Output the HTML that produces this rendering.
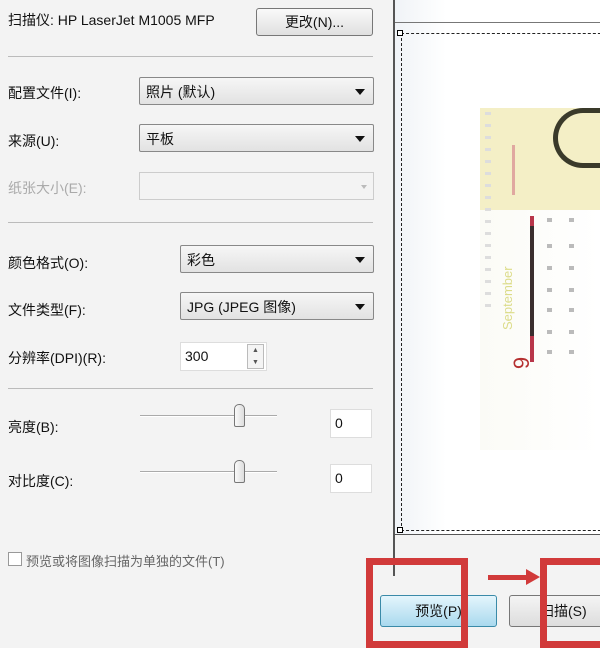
<!DOCTYPE html><html><head><meta charset="utf-8"><style>
*{box-sizing:border-box;margin:0;padding:0}
body{width:600px;height:640px;overflow:hidden;background:#f3f3f3;position:relative;font-family:"Liberation Sans","Noto Sans CJK SC",sans-serif;font-size:14px;color:#111}
.a{position:absolute}
.lbl{position:absolute;left:8px;font-size:14px}
.cb{position:absolute;border:1px solid #888;border-radius:2px;background:linear-gradient(#f6f6f6,#e2e2e2);padding:4px 6px;font-size:14px}
.cb:after{content:"";position:absolute;right:8px;top:11px;border:5px solid transparent;border-top:6px solid #111;border-bottom:0}
.hr{position:absolute;left:8px;width:365px;height:1px;background:#bbb}
.inp{position:absolute;background:#fff;border:1px solid #ddd;padding:5px 4px;font-size:14px}
.track{position:absolute;left:140px;width:137px;height:2px;background:#aaa;border-bottom:1px solid #fff}
.thumb{position:absolute;width:11px;height:23px;border:1px solid #777;border-radius:5px 5px 2px 2px;background:linear-gradient(90deg,#fafafa,#ddd)}
.d{position:absolute;width:5px;height:4px;background:#bbb}
</style></head><body>
<div class="lbl" style="top:10px">扫描仪: HP LaserJet M1005 MFP</div>
<div class="a" style="left:256px;top:8px;width:117px;height:28px;border:1px solid #777;border-radius:3px;background:linear-gradient(#fafafa,#e0e0e0);text-align:center;line-height:26px">更改(N)...</div>
<div class="hr" style="top:56px"></div>
<div class="lbl" style="top:83px">配置文件(I):</div>
<div class="cb" style="left:139px;top:77px;width:235px;height:28px">照片 (默认)</div>
<div class="lbl" style="top:131px">来源(U):</div>
<div class="cb" style="left:139px;top:124px;width:235px;height:28px">平板</div>
<div class="lbl" style="top:178px;color:#aaa">纸张大小(E):</div>
<div class="a" style="left:139px;top:172px;width:235px;height:28px;border:1px solid #ccc;background:#f3f3f3"></div>
<div class="a" style="left:361px;top:185px;border:3px solid transparent;border-top:4px solid #bbb"></div>
<div class="hr" style="top:222px"></div>
<div class="lbl" style="top:253px">颜色格式(O):</div>
<div class="cb" style="left:180px;top:245px;width:194px;height:28px">彩色</div>
<div class="lbl" style="top:300px">文件类型(F):</div>
<div class="cb" style="left:180px;top:292px;width:194px;height:28px">JPG (JPEG 图像)</div>
<div class="lbl" style="top:348px">分辨率(DPI)(R):</div>
<div class="inp" style="left:180px;top:342px;width:87px;height:29px">300</div>
<div class="a" style="left:247px;top:344px;width:17px;height:25px;border:1px solid #bbb;background:#f4f4f4;font-size:7px;text-align:center;line-height:12px;color:#555">▲<br>▼</div>
<div class="hr" style="top:388px"></div>
<div class="lbl" style="top:417px">亮度(B):</div>
<div class="track" style="top:415px"></div>
<div class="thumb" style="left:234px;top:404px"></div>
<div class="inp" style="left:330px;top:409px;width:42px;height:29px">0</div>
<div class="lbl" style="top:471px">对比度(C):</div>
<div class="track" style="top:471px"></div>
<div class="thumb" style="left:234px;top:460px"></div>
<div class="inp" style="left:330px;top:464px;width:42px;height:29px">0</div>
<div class="a" style="left:8px;top:552px;width:14px;height:14px;border:1px solid #999;background:#fff"></div>
<div class="a" style="left:26px;top:551px;font-size:13px;color:#666">预览或将图像扫描为单独的文件(T)</div>
<div class="a" style="left:393px;top:0;width:2px;height:576px;background:#555"></div>
<div class="a" style="left:395px;top:0;width:205px;height:535px;background:linear-gradient(90deg,#f0f3f7,#fff 25%);border-bottom:1px solid #555"></div>
<div class="a" style="left:395px;top:22px;width:205px;height:1px;background:#777"></div>
<div class="a" style="left:401px;top:33px;width:210px;height:498px;border:1px dashed #222"></div>
<div class="a" style="left:397px;top:30px;width:6px;height:6px;border:1px solid #000;background:#fff"></div>
<div class="a" style="left:397px;top:527px;width:6px;height:6px;border:1px solid #000;background:#fff"></div>
<div class="a" style="left:480px;top:108px;width:120px;height:102px;background:#f4efc6"></div>
<div class="a" style="left:480px;top:210px;width:120px;height:240px;background:linear-gradient(90deg,#fbfbf6,#fff)"></div>
<div class="a" style="left:530px;top:216px;width:4px;height:145px;background:#3a2e2e"></div>
<div class="a" style="left:530px;top:216px;width:4px;height:10px;background:#b8364a"></div>
<div class="a" style="left:530px;top:336px;width:4px;height:26px;background:#b8364a"></div>
<div class="a" style="left:553px;top:108px;width:47px;height:60px;border:5px solid #3a3a2a;border-radius:30px 0 0 30px;border-right:0"></div>
<div class="a" style="left:512px;top:145px;width:3px;height:50px;background:#e0a8a0"></div>
<div class="a" style="left:485px;top:112px;width:6px;height:200px;background:repeating-linear-gradient(#ddd 0 3px,transparent 3px 12px)"></div>
<div class="d" style="left:547px;top:218px"></div><div class="d" style="left:569px;top:218px"></div>
<div class="d" style="left:547px;top:244px"></div><div class="d" style="left:569px;top:244px"></div>
<div class="d" style="left:547px;top:266px"></div><div class="d" style="left:569px;top:266px"></div>
<div class="d" style="left:547px;top:288px"></div><div class="d" style="left:569px;top:288px"></div>
<div class="d" style="left:547px;top:308px"></div><div class="d" style="left:569px;top:308px"></div>
<div class="d" style="left:547px;top:330px"></div><div class="d" style="left:569px;top:330px"></div>
<div class="d" style="left:547px;top:350px"></div><div class="d" style="left:569px;top:350px"></div>
<div class="a" style="left:500px;top:330px;font-size:13px;color:#dcdc8a;transform:rotate(-90deg);transform-origin:0 0;white-space:nowrap" >September</div>
<div class="a" style="left:516px;top:350px;font-size:22px;color:#b53030;transform:rotate(-90deg)">9</div>
<div class="a" style="left:380px;top:595px;width:117px;height:32px;border:1px solid #3a8aa8;border-radius:3px;background:linear-gradient(#e4f5fc,#a9d9ee);text-align:center;line-height:30px">预览(P)</div>
<div class="a" style="left:509px;top:595px;width:100px;height:32px;border:1px solid #777;border-radius:3px;background:linear-gradient(#f4f4f4,#ddd);padding-left:30px;line-height:30px">扫描(S)</div>
<div class="a" style="left:366px;top:558px;width:102px;height:90px;border:7px solid #d13a3a"></div>
<div class="a" style="left:540px;top:558px;width:70px;height:90px;border:7px solid #d13a3a"></div>
<div class="a" style="left:488px;top:575px;width:40px;height:5px;background:#d13a3a"></div>
<div class="a" style="left:526px;top:569px;border:8px solid transparent;border-left:14px solid #d13a3a"></div>
</body></html>
